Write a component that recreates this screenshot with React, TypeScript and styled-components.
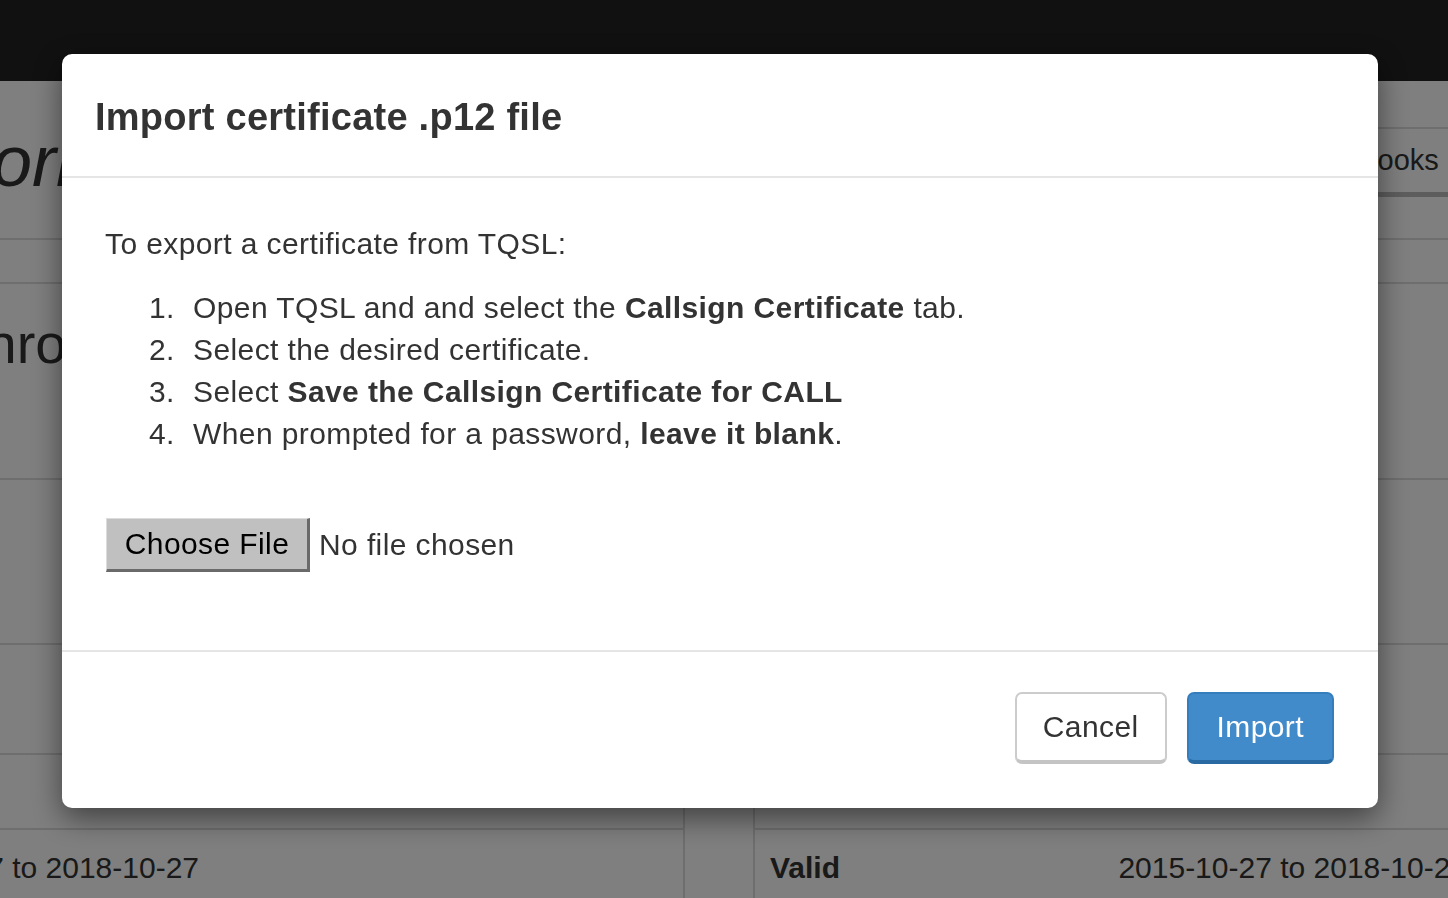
import React from "react";
import styled, { createGlobalStyle } from "styled-components";

const GlobalStyle = createGlobalStyle`
  html, body {
    margin: 0;
    padding: 0;
    height: 100%;
    overflow: hidden;
    background: #fff;
    font-family: "Liberation Sans", Arial, sans-serif;
    color: #333;
  }
  * {
    box-sizing: border-box;
  }
`;

const steps: React.ReactNode[] = [
  <>
    Open TQSL and and select the <b>Callsign Certificate</b> tab.
  </>,
  <>Select the desired certificate.</>,
  <>
    Select <b>Save the Callsign Certificate for CALL</b>
  </>,
  <>
    When prompted for a password, <b>leave it blank</b>.
  </>,
];

export default function App() {
  return (
    <>
      <GlobalStyle />
      <Page>
        <Navbar />
        <Wide>
          <Inner>
            <HeaderRow>
              <Title>Network</Title>
              <ButtonBar>
                <PageButton>Logbooks</PageButton>
                <PageButton>Certificates</PageButton>
              </ButtonBar>
            </HeaderRow>
            <TabsRow />
            <Columns>
              <Column>
                <Row h={196}>
                  <SectionHeading>Synchronization</SectionHeading>
                </Row>
                <Row h={165} />
                <Row h={110} />
                <Row h={75} />
                <DataRow>
                  <Label>Valid</Label>
                  <Value>2015-10-27 to 2018-10-27</Value>
                </DataRow>
              </Column>
              <Column>
                <Row h={196} />
                <Row h={165} />
                <Row h={110} />
                <Row h={75} />
                <DataRow>
                  <Label>Valid</Label>
                  <Value>2015-10-27 to 2018-10-27</Value>
                </DataRow>
              </Column>
            </Columns>
          </Inner>
        </Wide>
      </Page>

      <Backdrop>
        <Modal>
          <ModalHeader>
            <ModalTitle>Import certificate .p12 file</ModalTitle>
          </ModalHeader>
          <ModalBody>
            <Intro>To export a certificate from TQSL:</Intro>
            <Steps>
              {steps.map((s, i) => (
                <Step key={i}>{s}</Step>
              ))}
            </Steps>
            <FileField>
              <FileButton>Choose File</FileButton>
              <FileName>No file chosen</FileName>
            </FileField>
          </ModalBody>
          <ModalFooter>
            <Button>Cancel</Button>
            <Button primary>Import</Button>
          </ModalFooter>
        </Modal>
      </Backdrop>
    </>
  );
}

/* ---------- page behind the dialog ---------- */

const Page = styled.div`
  width: 100vw;
  height: 100vh;
  overflow: hidden;
`;

const Navbar = styled.div`
  height: 81px;
  background: #222;
`;

const Wide = styled.div`
  display: flex;
  justify-content: center;
  padding-right: 10px;
`;

const Inner = styled.div`
  flex: none;
  width: 2468px;
`;

const HeaderRow = styled.div`
  height: 159px;
  display: grid;
  grid-template-columns: 1200px 1200px;
  column-gap: 68px;
  border-bottom: 2px solid #ddd;
`;

const Title = styled.h1`
  margin: 0;
  padding: 44px 0 0 343px;
  font-size: 72px;
  line-height: 72px;
  font-style: italic;
  font-weight: 400;
  color: #333;
`;

const ButtonBar = styled.div`
  display: flex;
  padding: 46px 0 0 534px;
  align-items: flex-start;
`;

const PageButton = styled.div`
  height: 70px;
  padding: 0 24px;
  display: flex;
  align-items: center;
  font-size: 29px;
  color: #333;
  border: 2px solid #ddd;
  border-bottom: 5px solid #bbb;
  white-space: nowrap;
`;

const TabsRow = styled.div`
  height: 44px;
  border-bottom: 2px solid #ddd;
`;

const Columns = styled.div`
  display: grid;
  grid-template-columns: 1200px 1200px;
  column-gap: 68px;
`;

const Column = styled.div`
  border-left: 2px solid #ddd;
  border-right: 2px solid #ddd;
`;

const Row = styled.div<{ h: number }>`
  height: ${(p) => p.h}px;
  border-bottom: 2px solid #ddd;
`;

const SectionHeading = styled.h2`
  margin: 0;
  padding: 32px 0 0 374px;
  font-size: 56px;
  line-height: 56px;
  font-weight: 400;
  color: #333;
  white-space: nowrap;
`;

const DataRow = styled.div`
  display: flex;
  justify-content: space-between;
  padding: 17px 484px 0 15px;
  font-size: 30px;
  line-height: 42px;
  height: 120px;
`;

const Label = styled.div`
  font-weight: 700;
`;

const Value = styled.div`
  white-space: nowrap;
`;

/* ---------- dialog ---------- */

const Backdrop = styled.div`
  position: fixed;
  inset: 0;
  background: rgba(0, 0, 0, 0.5);
  padding: 54px 0 0 62px;
`;

const Modal = styled.div`
  width: 1316px;
  background: #fff;
  border-radius: 10px;
  box-shadow: 0 10px 30px rgba(0, 0, 0, 0.5);
  font-size: 30px;
  letter-spacing: 0.4px;
  color: #333;
`;

const ModalHeader = styled.div`
  padding: 37px 33px 33px;
  border-bottom: 2px solid #e5e5e5;
`;

const ModalTitle = styled.h4`
  margin: 0;
  font-size: 38px;
  line-height: 52px;
  font-weight: 700;
  letter-spacing: 0.25px;
  color: #333;
`;

const ModalBody = styled.div`
  padding: 45px 43px 78px;
  line-height: 42px;
`;

const Intro = styled.p`
  margin: 0 0 22px;
`;

const Steps = styled.ol`
  margin: 0 0 63px;
  padding: 0 0 0 44px;
  list-style: none;
  counter-reset: step;
`;

const Step = styled.li`
  counter-increment: step;
  b {
    font-weight: 700;
  }
  &::before {
    content: counter(step) ".";
    display: inline-block;
    width: 44px;
  }
`;

const FileField = styled.div`
  display: flex;
  align-items: center;
  height: 54px;
`;

const FileButton = styled.span`
  height: 54px;
  width: 204px;
  display: flex;
  align-items: center;
  justify-content: center;
  margin-left: 1px;
  background: #c0c0c0;
  color: #000;
  border-style: solid;
  border-color: #dcdcdc #6a6a6a #6a6a6a #dcdcdc;
  border-width: 1px 3px 3px 1px;
`;

const FileName = styled.span`
  margin-left: 9px;
  color: #333;
`;

const ModalFooter = styled.div`
  display: flex;
  justify-content: flex-end;
  gap: 20px;
  padding: 40px 44px 44px;
  border-top: 2px solid #e5e5e5;
`;

const Button = styled.button<{ primary?: boolean }>`
  height: 72px;
  padding: 0 ${(p) => (p.primary ? 28 : 26)}px;
  font-family: inherit;
  font-size: 30px;
  letter-spacing: 0.4px;
  border-radius: 7px;
  cursor: pointer;
  color: ${(p) => (p.primary ? "#fff" : "#333")};
  background: ${(p) => (p.primary ? "#428bca" : "#fff")};
  border: 2px solid ${(p) => (p.primary ? "#357ebd" : "#ccc")};
  border-bottom: 4px solid ${(p) => (p.primary ? "#2a6aa3" : "#c4c4c4")};
`;
